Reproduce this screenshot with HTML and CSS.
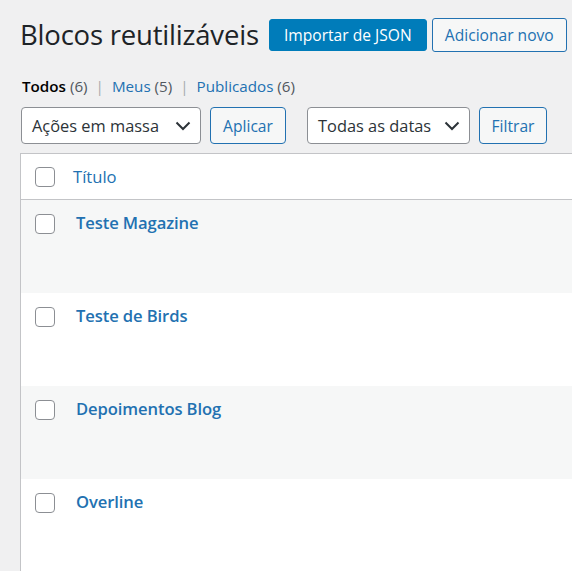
FILE: index.html
```html
<!DOCTYPE html>
<html lang="pt-BR">
<head>
<meta charset="utf-8">
<title>Blocos reutilizáveis</title>
<link rel="stylesheet" href="styles.css">
</head>
<body>
<div class="wrap">
  <div class="page-head">
    <h1 class="page-title">Blocos reutilizáveis</h1>
    <a class="btn btn-primary btn-import">Importar de JSON</a>
    <a class="btn btn-secondary btn-add">Adicionar novo</a>
  </div>
  <ul class="subsubsub">
    <li class="current">Todos <span class="count">(6)</span></li>
    <li class="sep">|</li>
    <li><a>Meus <span class="count">(5)</span></a></li>
    <li class="sep">|</li>
    <li><a>Publicados <span class="count">(6)</span></a></li>
  </ul>
  <div class="tablenav">
    <div class="select select-bulk"><span>Ações em massa</span>
      <svg class="chev" viewBox="0 0 16 10" width="16" height="10"><path d="M1.5 1.5 L8 8 L14.5 1.5" fill="none" stroke="#2c3338" stroke-width="2"/></svg>
    </div>
    <a class="btn btn-outline btn-apply">Aplicar</a>
    <div class="select select-dates"><span>Todas as datas</span>
      <svg class="chev" viewBox="0 0 16 10" width="16" height="10"><path d="M1.5 1.5 L8 8 L14.5 1.5" fill="none" stroke="#2c3338" stroke-width="2"/></svg>
    </div>
    <a class="btn btn-outline btn-filter">Filtrar</a>
  </div>
  <div class="list-table">
    <div class="thead">
      <span class="checkbox"></span>
      <a class="col-title">Título</a>
    </div>
    <div class="trow alt">
      <span class="checkbox"></span>
      <a class="row-title">Teste Magazine</a>
    </div>
    <div class="trow">
      <span class="checkbox"></span>
      <a class="row-title">Teste de Birds</a>
    </div>
    <div class="trow alt">
      <span class="checkbox"></span>
      <a class="row-title">Depoimentos Blog</a>
    </div>
    <div class="trow last">
      <span class="checkbox"></span>
      <a class="row-title">Overline</a>
    </div>
  </div>
</div>
</body>
</html>
```

FILE: styles.css
```css
html, body {
  margin: 0;
  padding: 0;
  background: #f0f0f1;
  overflow: hidden;
}
body {
  font-family: "Open Sans", "Noto Sans", "DejaVu Sans", sans-serif;
  color: #1d2327;
  width: 572px;
  height: 571px;
}
a { color: #2271b1; text-decoration: none; }

.wrap {
  padding: 18px 0 0 20px;
  overflow: hidden;
}

.page-head {
  display: flex;
  align-items: center;
  height: 34px;
}
.page-title {
  margin: 0;
  font-size: 27.5px;
  font-weight: 400;
  line-height: 34px;
  letter-spacing: -0.2px;
  margin-right: 10px;
  margin-top: -1px;
}
.btn {
  display: flex;
  align-items: center;
  justify-content: center;
  box-sizing: border-box;
  border-radius: 3px;
  font-size: 15.6px;
  white-space: nowrap;
}
.btn-primary {
  background: #007cba;
  border: 1px solid #007cba;
  color: #fff;
  width: 158px;
  height: 32px;
}
.btn-secondary {
  background: #f6f7f7;
  border: 1px solid #2271b1;
  color: #2271b1;
  width: 135px;
  height: 34px;
  margin-left: 5px;
}

.subsubsub {
  list-style: none;
  margin: 24px 0 0 2px;
  padding: 0;
  display: flex;
  font-size: 15.2px;
  line-height: 20px;
  height: 20px;
}
.subsubsub li { white-space: nowrap; }
.subsubsub .current { color: #000; font-weight: 600; }
.subsubsub .count { color: #50575e; font-weight: 400; }
.subsubsub .sep { color: #a7aaad; margin: 0 8px; }

.tablenav {
  display: flex;
  align-items: center;
  margin-top: 11px;
  margin-left: 1px;
  height: 37px;
}
.select {
  box-sizing: border-box;
  height: 37px;
  border: 1px solid #8c8f94;
  border-radius: 4px;
  background: #fff;
  color: #2c3338;
  font-size: 16.4px;
  display: flex;
  align-items: center;
  justify-content: space-between;
  padding: 0 9px 0 10px;
}
.select-bulk { width: 180px; }
.select-dates { width: 163px; margin-left: 21px; }
.chev { display: block; margin-top: 1px; }

.btn-outline {
  height: 37px;
  background: #f6f7f7;
  border: 1px solid #2271b1;
  color: #2271b1;
  font-size: 15.6px;
  border-radius: 4px;
  margin-left: 9px;
}
.btn-apply { width: 76px; }
.btn-filter { width: 68px; }

.list-table {
  margin-top: 9px;
  border: 1px solid #c3c4c7;
  border-right: none;
  border-bottom: none;
  background: #fff;
}
.thead {
  border-bottom: 1px solid #c3c4c7;
  display: flex;
  align-items: flex-start;
  padding-left: 14px;
  box-sizing: border-box;
  height: 46px;
}
.thead .checkbox { margin-top: 13px; }
.col-title {
  font-size: 16.6px;
  margin-left: 18px;
  line-height: 20px;
  margin-top: 13px;
}
.trow {
  height: 93px;
  display: flex;
  align-items: flex-start;
  padding-left: 14px;
  box-sizing: border-box;
}
.trow.alt { background: #f6f7f7; }
.trow.last { height: 120px; }
.trow .checkbox { margin-top: 14px; }
.row-title {
  font-size: 16.6px;
  font-weight: 600;
  margin-left: 21px;
  line-height: 20px;
  margin-top: 13px;
  letter-spacing: -0.1px;
}
.checkbox {
  display: block;
  width: 20px;
  height: 20px;
  box-sizing: border-box;
  border: 1px solid #8c8f94;
  border-radius: 4px;
  background: #fff;
  flex: none;
}
```
